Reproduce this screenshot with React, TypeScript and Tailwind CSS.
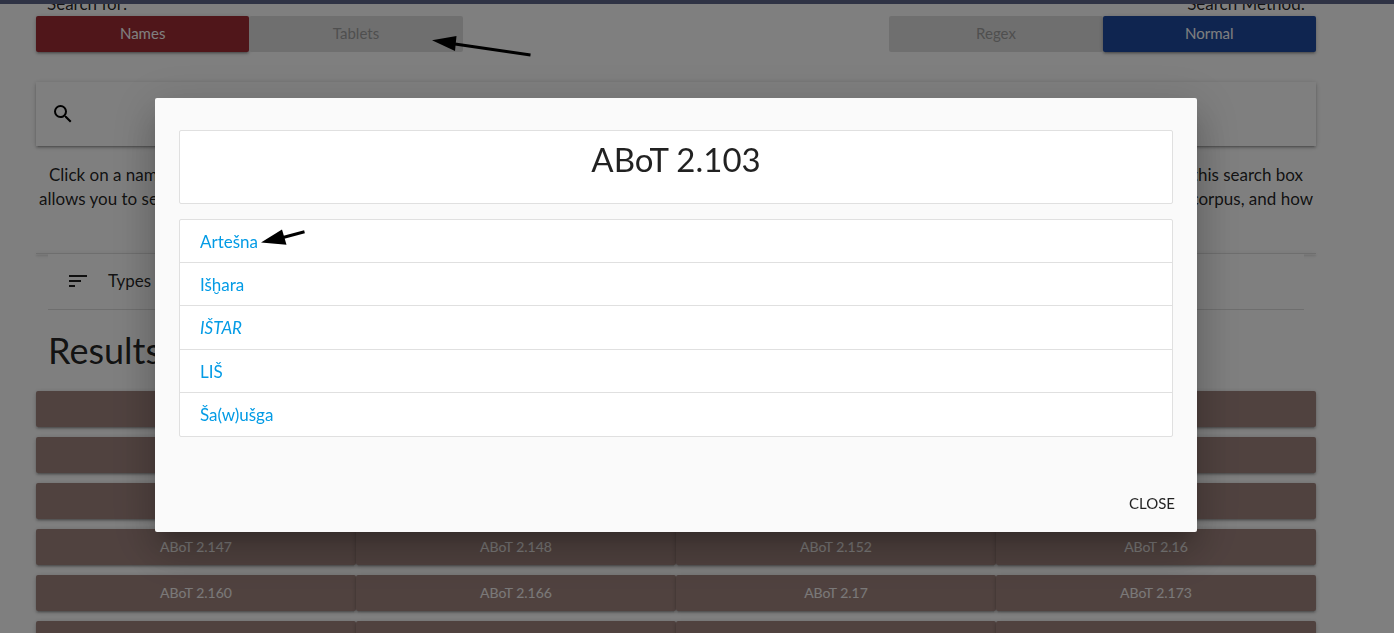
import { useState } from "react";

const tablets = [
  "ABoT 2.103", "ABoT 2.11", "ABoT 2.115", "ABoT 2.121",
  "ABoT 2.122", "ABoT 2.125", "ABoT 2.129", "ABoT 2.13",
  "ABoT 2.131", "ABoT 2.135", "ABoT 2.14", "ABoT 2.141",
  "ABoT 2.147", "ABoT 2.148", "ABoT 2.152", "ABoT 2.16",
  "ABoT 2.160", "ABoT 2.166", "ABoT 2.17", "ABoT 2.173",
  "ABoT 2.175", "ABoT 2.18", "ABoT 2.182", "ABoT 2.19",
];

const names = [
  { label: "Artešna" },
  { label: "Išḫara" },
  { label: "IŠTAR", italic: true },
  { label: "LIŠ" },
  { label: "Ša(w)ušga" },
];

const raised =
  "shadow-[0_2px_2px_0_rgba(0,0,0,0.14),0_3px_1px_-2px_rgba(0,0,0,0.12),0_1px_5px_0_rgba(0,0,0,0.2)]";

function SearchIcon() {
  return (
    <svg viewBox="0 0 24 24" className="size-6 shrink-0" fill="#000" aria-hidden="true">
      <path d="M15.5 14h-.79l-.28-.27A6.471 6.471 0 0 0 16 9.5 6.5 6.5 0 1 0 9.5 16c1.61 0 3.09-.59 4.23-1.57l.27.28v.79l5 4.99L20.49 19l-4.99-5zm-6 0C7.01 14 5 11.99 5 9.5S7.01 5 9.5 5 14 7.01 14 9.5 11.99 14 9.5 14z" />
    </svg>
  );
}

function SortIcon() {
  return (
    <svg viewBox="0 0 24 24" className="size-6 shrink-0" fill="currentColor" aria-hidden="true">
      <path d="M3 18h6v-2H3v2zM3 6v2h18V6H3zm0 7h12v-2H3v2z" />
    </svg>
  );
}

function ModeButton({ label, style }: { label: string; style: string }) {
  return (
    <button type="button" className={`h-9 rounded-xs pb-0.5 text-[15px] ${style}`}>
      {label}
    </button>
  );
}

function Page() {
  return (
    <div className="overflow-hidden pr-[78px] pl-9">
      <div className="-mt-3 flex justify-between px-[11px] text-[17px] leading-6">
        <span>Search for:</span>
        <span>Search Method:</span>
      </div>
      <div className="grid grid-cols-6">
        <ModeButton label="Names" style={`bg-[#a02c34] text-white ${raised}`} />
        <ModeButton label="Tablets" style="bg-[#dfdfdf] text-[#9f9f9f]" />
        <ModeButton label="Regex" style="col-start-5 bg-[#dfdfdf] text-[#9f9f9f]" />
        <ModeButton label="Normal" style={`bg-[#1e4aa0] text-white ${raised}`} />
      </div>

      <label className={`mt-[30px] flex h-16 items-center gap-4 px-[15px] ${raised}`}>
        <SearchIcon />
        <input type="search" aria-label="Search" className="h-full min-w-0 flex-1 outline-none" />
      </label>

      <div className="mt-[17px] text-[17px] leading-6">
        <p className="flex justify-between px-[13px]">
          <span>Click on a name</span>
          <span>this search box</span>
        </p>
        <p className="flex justify-between px-[3px]">
          <span>allows you to search</span>
          <span>corpus, and how</span>
        </p>
      </div>

      <div className={`mt-[42px] border-t border-[#ddd] ${raised}`} />
      <button
        type="button"
        className="relative mx-3 flex h-14 w-[calc(100%-24px)] items-center gap-[18px] border-b border-[#ddd] bg-white px-[18px] pb-0.5 text-[17px]"
      >
        <SortIcon />
        Types
      </button>

      <h2 className="mt-[18px] px-3 text-4xl leading-[44px]">Results</h2>

      <div className="mt-[19px] grid grid-cols-4 gap-y-[10px]">
        {tablets.map((tablet) => (
          <button
            key={tablet}
            type="button"
            className={`h-9 rounded-xs bg-[#a1857f] text-sm text-white/90 ${raised}`}
          >
            {tablet}
          </button>
        ))}
      </div>
    </div>
  );
}

function TabletDialog({ onClose }: { onClose: () => void }) {
  return (
    <div className="fixed inset-0 flex items-start bg-black/50 pt-[98px] pr-[197px] pl-[155px]">
      <section
        role="dialog"
        aria-modal="true"
        aria-labelledby="tablet-title"
        className="flex-1 rounded-xs bg-[#fafafa] shadow-[0_24px_38px_3px_rgba(0,0,0,0.14),0_9px_46px_8px_rgba(0,0,0,0.12),0_11px_15px_-7px_rgba(0,0,0,0.2)]"
      >
        <div className="px-6 pt-8">
          <div className="h-[74px] rounded-xs border border-[#e0e0e0] bg-white pt-[6px] text-center">
            <h1 id="tablet-title" className="text-[33px] leading-[44px]">
              ABoT 2.103
            </h1>
          </div>
          <ul className="mt-[15px] grid h-[218px] auto-rows-fr divide-y divide-[#e0e0e0] rounded-xs border border-[#e0e0e0] bg-white">
            {names.map(({ label, italic }) => (
              <li key={label} className="flex items-center px-5 pt-0.5 text-[17px] leading-6">
                <a href="#name" className={italic ? "text-[#039be5] italic" : "text-[#039be5]"}>
                  {label}
                </a>
              </li>
            ))}
          </ul>
        </div>
        <div className="mt-[39px] flex h-14 items-center justify-end px-[22px] pb-0.5">
          <button type="button" onClick={onClose} className="text-[15px]">
            CLOSE
          </button>
        </div>
      </section>
    </div>
  );
}

export default function App() {
  const [open, setOpen] = useState(true);
  return (
    <main className="h-screen overflow-hidden bg-white font-['Lato',sans-serif] text-black/87">
      <div className="h-1 bg-[#5e668a]" />
      <Page />
      {open && <TabletDialog onClose={() => setOpen(false)} />}
      <svg
        className="pointer-events-none absolute top-0 left-0 h-[260px] w-[540px]"
        viewBox="0 0 540 260"
        fill="#000"
        aria-hidden="true"
      >
        <path d="M432 40.3 456.5 36 455 51Z" />
        <path d="M455 44 530.5 55" stroke="#000" strokeWidth="3" />
        <path d="M261 242.6 282 229.5 286.5 244.7Z" />
        <path d="M283 237.5 304.5 231.8" stroke="#000" strokeWidth="3" />
      </svg>
    </main>
  );
}
